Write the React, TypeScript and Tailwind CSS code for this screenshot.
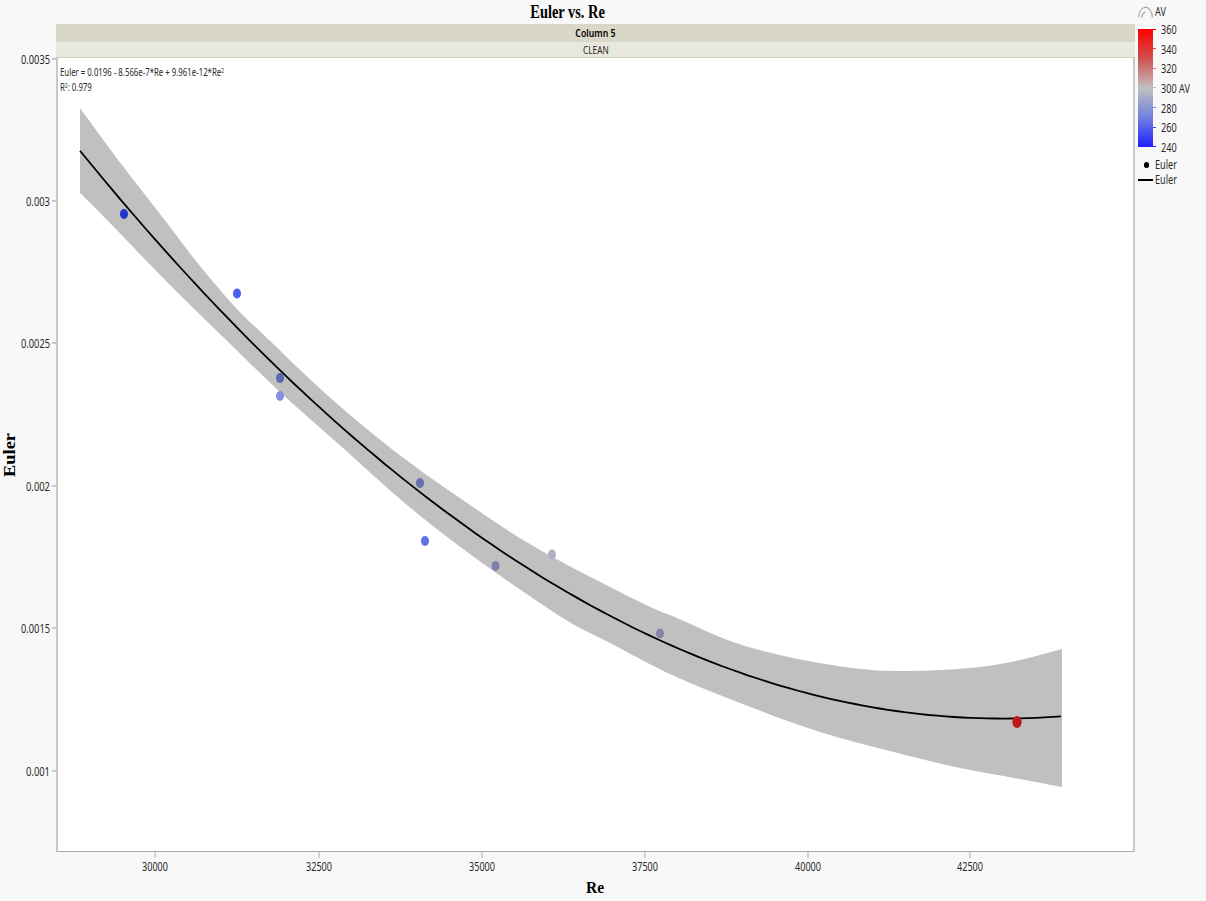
import React from 'react';

const UPPER: [number, number][] = [
  [80, 108], [122, 165], [167, 223], [200, 266], [237, 309], [267, 338], [325, 393], [393, 450], [470, 505], [540, 550],
  [640, 602], [677, 618], [733, 642], [793, 658], [853, 668], [893, 671], [940, 670], [980, 667], [1020, 660], [1062, 649],
];
const LOWER: [number, number][] = [
  [1062, 787], [1020, 779], [960, 768], [890, 751], [817, 731], [740, 703], [672, 675], [610, 643], [563, 618], [478, 560], [407, 505],
  [343, 448], [280, 392], [223, 337], [167, 282], [110, 223], [80, 193],
];

// catmull-rom through the traced band edge
const smooth = (pts: [number, number][]) =>
  pts
    .slice(0, -1)
    .map((p, i) => {
      const a = pts[i - 1] ?? p;
      const b = pts[i + 1];
      const c = pts[i + 2] ?? b;
      const c1 = [p[0] + (b[0] - a[0]) / 6, p[1] + (b[1] - a[1]) / 6];
      const c2 = [b[0] - (c[0] - p[0]) / 6, b[1] - (c[1] - p[1]) / 6];
      return `C${c1[0]} ${c1[1]} ${c2[0]} ${c2[1]} ${b[0]} ${b[1]}`;
    })
    .join(' ');

const BAND = `M80 108 ${smooth(UPPER)} L1062 787 ${smooth(LOWER)} Z`;

const yTicks = [
  { label: '0.0035', y: 59 },
  { label: '0.003', y: 201 },
  { label: '0.0025', y: 343 },
  { label: '0.002', y: 486 },
  { label: '0.0015', y: 628 },
  { label: '0.001', y: 771 },
];

const xTicks = [
  { label: '30000', x: 155 },
  { label: '32500', x: 319 },
  { label: '35000', x: 482 },
  { label: '37500', x: 645 },
  { label: '40000', x: 808 },
  { label: '42500', x: 970 },
];

const points = [
  { x: 124, y: 214, fill: '#2036c8' },
  { x: 237, y: 293.5, fill: '#4a60f0' },
  { x: 280, y: 396, fill: '#8490e0' },
  { x: 280, y: 378, fill: '#5a68b0' },
  { x: 420, y: 483, fill: '#6570ac' },
  { x: 425, y: 541, fill: '#5f72ea' },
  { x: 495.5, y: 566, fill: '#7a80a8' },
  { x: 552, y: 554.5, fill: '#aeb0c8' },
  { x: 660, y: 633.5, fill: '#8385a8' },
];

const scale = [
  { label: '360', tick: '#ff0000' },
  { label: '340', tick: '#e04040' },
  { label: '320', tick: '#d08080' },
  { label: '300 AV', tick: '#c0c0c0' },
  { label: '280', tick: '#8088e0' },
  { label: '260', tick: '#4050f0' },
  { label: '240', tick: '#2020ff' },
];

// fitted curve from the equation in the plot
const curve = Array.from({ length: 120 }, (_, i) => {
  const x = 80 + (i * (1061 - 80)) / 119;
  const re = 30000 + (x - 155) / 0.0652;
  const euler = 0.0196 - 8.566e-7 * re + 9.961e-12 * re * re;
  return `${x.toFixed(1)},${(771 - (euler - 0.001) * 284800).toFixed(1)}`;
}).join(' ');

const Narrow = ({ children, className = '' }: { children: React.ReactNode; className?: string }) => (
  <span className={`inline-block origin-left scale-x-[0.76] whitespace-nowrap ${className}`}>{children}</span>
);

const App: React.FC = () => {
  return (
    <div className="flex h-[901px] w-[1206px] overflow-hidden bg-[#f8f8f8] font-['Noto_Sans',sans-serif] text-[12px] text-[#2a2a2a]">
      <div className="flex w-[1135px] flex-col">
        {/* Title */}
        <div className="flex h-6 items-center justify-center">
          <span className="inline-block scale-x-[0.8] whitespace-nowrap font-['Liberation_Serif',serif] text-[18px] font-bold leading-none text-black">
            Euler vs. Re
          </span>
        </div>

        <div className="grid grid-cols-[56px_1079px] grid-rows-[18px_16px_794px_49px]">
          {/* Y axis */}
          <svg width="56" height="828" viewBox="0 24 56 828" className="row-span-3 overflow-visible">
            <text
              transform="translate(15 477) rotate(-90)"
              textLength="44"
              lengthAdjust="spacingAndGlyphs"
              fontFamily="'Liberation Serif', serif"
              fontWeight="700"
              fontSize="17"
              fill="#000"
            >
              Euler
            </text>
            {yTicks.map(t => (
              <g key={t.label}>
                <line x1="52" x2="56" y1={t.y} y2={t.y} stroke="#999" />
                <text
                  x="50"
                  y={t.y + 5}
                  textAnchor="end"
                  textLength={t.label.length === 6 ? 29 : 24}
                  lengthAdjust="spacingAndGlyphs"
                  fontSize="12"
                  fill="#2a2a2a"
                >
                  {t.label}
                </text>
              </g>
            ))}
          </svg>

          {/* Group headers */}
          <div className="flex items-center justify-center bg-[#d9d8c8] text-[11.5px] font-semibold text-black">
            <span className="inline-block scale-x-[0.76] whitespace-nowrap">Column 5</span>
          </div>
          <div className="flex items-center justify-center border-b border-[#d2d2c4] bg-[#e8e8df] text-[11.5px]">
            <span className="inline-block scale-x-[0.72] whitespace-nowrap">CLEAN</span>
          </div>

          {/* Plot */}
          <div className="relative border-x-2 border-b border-x-[#c8c8c8] border-b-[#aaaaaa] bg-white">
            <svg width="1075" height="793" viewBox="58 58 1075 793" className="block">
              <path d={BAND} fill="#c0c0c0" />
              <polyline points={curve} fill="none" stroke="#000" strokeWidth="1.8" strokeLinejoin="round" />
              {points.map(p => (
                <ellipse key={`${p.x}-${p.y}`} cx={p.x} cy={p.y} rx="4" ry="5" fill={p.fill} />
              ))}
              <ellipse cx="1017" cy="722" rx="4.7" ry="6" fill="#c01818" />
            </svg>
            <div className="absolute left-[2px] top-[6px] text-[11px] leading-[15px]">
              <div>
                <span className="inline-block origin-left scale-x-[0.71] whitespace-nowrap">
                  Euler = 0.0196 - 8.566e-7*Re + 9.961e-12*Re<sup className="text-[7px]">2</sup>
                </span>
              </div>
              <div>
                <span className="inline-block origin-left scale-x-[0.71] whitespace-nowrap">
                  R<sup className="text-[7px]">2</sup>: 0.979
                </span>
              </div>
            </div>
          </div>

          {/* X axis */}
          <svg width="1079" height="49" viewBox="56 852 1079 49" className="col-start-2 overflow-visible">
            {xTicks.map(t => (
              <g key={t.label}>
                <line x1={t.x} x2={t.x} y1="852" y2="858" stroke="#b0b0b0" />
                <text
                  x={t.x}
                  y="871"
                  textAnchor="middle"
                  textLength="26"
                  lengthAdjust="spacingAndGlyphs"
                  fontSize="12"
                  fill="#2a2a2a"
                >
                  {t.label}
                </text>
              </g>
            ))}
            <text
              x="595"
              y="893"
              textAnchor="middle"
              textLength="18"
              lengthAdjust="spacingAndGlyphs"
              fontFamily="'Liberation Serif', serif"
              fontWeight="700"
              fontSize="17"
              fill="#000"
            >
              Re
            </text>
          </svg>
        </div>
      </div>

      {/* Legend */}
      <div className="flex w-[71px] flex-col pl-[3px] pt-[5px]">
        <div className="flex h-[14px] items-center gap-[2px]">
          <svg width="15" height="12" viewBox="0 0 15 12">
            <path d="M0.7 11.5 C0.7 6 3.5 2 7.5 1.2 C11 1.2 14.3 6 14.3 11.5" fill="none" stroke="#a8a8a8" strokeWidth="1.2" />
            <path d="M4 11.5 C4 8 5.5 6.5 7.5 6.5" fill="none" stroke="#9a9a9a" strokeWidth="1.1" />
          </svg>
          <Narrow>AV</Narrow>
        </div>

        <div className="mt-[10px] flex h-[118px]">
          <div className="w-[15px] bg-[linear-gradient(#ff0000_0%,#d05050_25%,#c0c0c0_50%,#7080e0_75%,#2020ff_100%)]" />
          <div className="flex flex-col justify-between">
            {scale.map(s => (
              <div key={s.label} className="flex h-0 items-center">
                <div className="h-px w-[3px]" style={{ backgroundColor: s.tick }} />
                <Narrow className="ml-[5px] translate-y-px">{s.label}</Narrow>
              </div>
            ))}
          </div>
        </div>

        <div className="mt-[10px] flex h-[15px] items-center">
          <div className="flex w-[17px] justify-center">
            <div className="h-[6px] w-[5px] rounded-full bg-black" />
          </div>
          <Narrow>Euler</Narrow>
        </div>
        <div className="flex h-[15px] items-center">
          <div className="mr-[2px] h-[2px] w-[15px] bg-black" />
          <Narrow>Euler</Narrow>
        </div>
      </div>
    </div>
  );
};

export default App;
